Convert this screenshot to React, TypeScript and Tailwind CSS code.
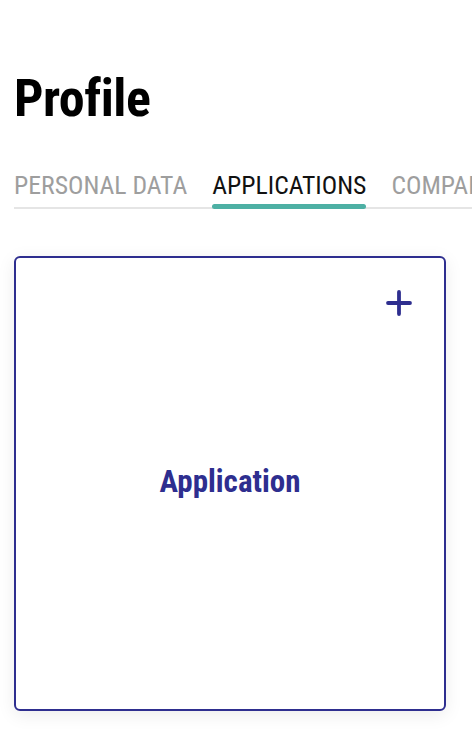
import React from "react";

export default function App() {
  const tabs = ["PERSONAL DATA", "APPLICATIONS", "COMPANIES"];
  return (
    <div
      className="w-[472px] h-[734px] bg-white overflow-hidden"
      style={{ fontFamily: "Roboto, 'Liberation Sans', sans-serif", fontStretch: "condensed" }}
    >
      <div className="pl-[14px] pt-[69px]">
        <h1 className="text-[52px] leading-[60px] font-bold text-black tracking-[-0.5px]">Profile</h1>
        <div className="mt-[41px] relative overflow-hidden">
          <div className="flex gap-[25px] whitespace-nowrap border-b-2 border-[#e5e5e5] pb-[7px]">
            {tabs.map((t, i) => (
              <div
                key={t}
                className={
                  "relative text-[25.7px] leading-[30px] " +
                  (i === 1 ? "text-[#111]" : "text-[#9e9e9e]")
                }
              >
                {t}
                {i === 1 && (
                  <div className="absolute left-0 right-0 -bottom-[9px] h-[5px] rounded-full bg-[#4db0a4]" />
                )}
              </div>
            ))}
          </div>
        </div>
        <div className="mt-[47px] w-[432px] h-[455px] border-2 border-[#2e2e8f] rounded-[6px] bg-white shadow-[0_4px_18px_rgba(0,0,0,0.08)] relative flex items-center justify-center">
          <svg
            className="absolute right-[32px] top-[32px]"
            width="26"
            height="26"
            viewBox="0 0 26 26"
            fill="none"
            stroke="#2e2e8f"
            strokeWidth="3.8"
            strokeLinecap="round"
          >
            <line x1="13" y1="2" x2="13" y2="24" />
            <line x1="2" y1="13" x2="24" y2="13" />
          </svg>
          <span className="text-[31px] font-bold text-[#2e2e8f] -mt-[2px]">Application</span>
        </div>
      </div>
    </div>
  );
}
